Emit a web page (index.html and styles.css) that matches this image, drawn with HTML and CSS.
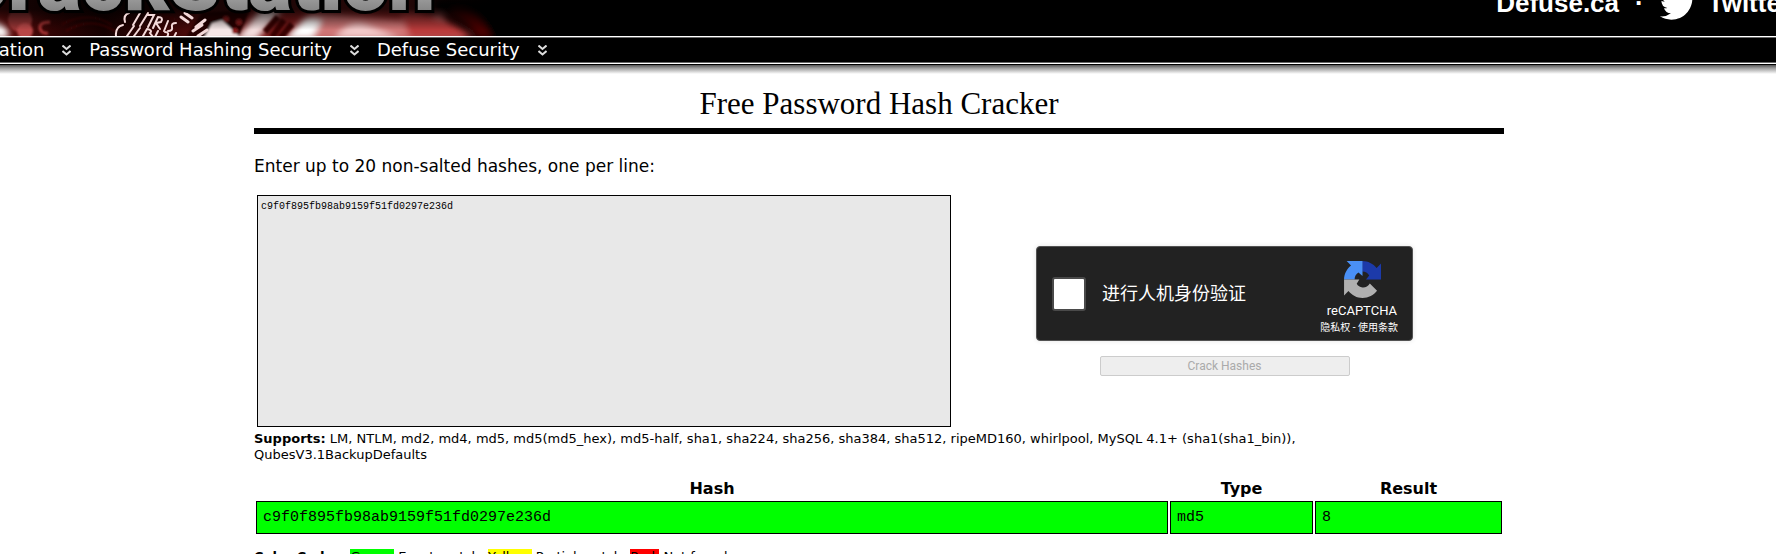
FILE: index.html
```
<!DOCTYPE html>
<html lang="en">
<head>
<meta charset="utf-8">
<title>CrackStation - Free Password Hash Cracker</title>
<link rel="stylesheet" href="styles.css">
</head>
<body>
<header class="banner">
  <svg class="banner-art" viewBox="0 0 520 36" role="img" aria-label="CrackStation">
    <defs>
      <filter id="soft" x="-20%" y="-50%" width="140%" height="200%"><feGaussianBlur stdDeviation="3"/></filter>
      <filter id="fine" x="-20%" y="-50%" width="140%" height="200%"><feGaussianBlur stdDeviation="0.8"/></filter>
      <linearGradient id="base" x1="0" x2="1">
        <stop offset="0" stop-color="#6b1010"/><stop offset=".1" stop-color="#300404"/>
        <stop offset=".2" stop-color="#140000"/><stop offset=".32" stop-color="#3a0505"/>
        <stop offset=".5" stop-color="#7a1818"/><stop offset=".78" stop-color="#8f2020"/>
        <stop offset=".86" stop-color="#2a0303"/><stop offset=".95" stop-color="#000"/>
      </linearGradient>
      <linearGradient id="shade" x1="0" y1="0" x2="0" y2="1">
        <stop offset=".3" stop-color="#000" stop-opacity=".75"/><stop offset="1" stop-color="#000" stop-opacity="0"/>
      </linearGradient>
      <linearGradient id="metal" gradientUnits="userSpaceOnUse" x1="0" y1="-38" x2="0" y2="11">
        <stop offset="0" stop-color="#eee"/><stop offset=".75" stop-color="#999"/><stop offset="1" stop-color="#858585"/>
      </linearGradient>
    </defs>
    <rect width="520" height="36" fill="url(#base)"/>
    <g filter="url(#soft)">
      <path d="M0 24Q10 28 8 38H-6V20z" fill="#fff"/>
      <path d="M235 40L262 8 282 10 256 40z" fill="#f4dede"/>
      <path d="M285 40L312 12 400 20 440 14 465 40z" fill="#cf7474"/>
      <path d="M285 38L305 18 322 20 312 38z" fill="#fff"/>
      <path d="M335 38Q350 18 368 26L400 38z" fill="#f3caca"/>
      <path d="M400 12Q436 10 474 38H410z" fill="#b83a3a"/>
      <path d="M432 0H520V36H490Q462 6 438 12z" fill="#050000"/>
      <path d="M478 38Q470 22 450 10Q476 4 492 38z" fill="#4a0505"/>
    </g>
    <g filter="url(#fine)">
      <circle cx="20" cy="20" r="12" fill="#9a3434"/>
      <circle cx="25" cy="31" r="8" fill="#b84747"/>
      <path d="M50 22q-11 0-10 6q1 6 8 5" fill="none" stroke="#a93636" stroke-width="3"/>
      <path d="M62 24Q90 10 112 25M66 31Q92 15 116 32M152 17Q170 13 182 24" fill="none" stroke="#5a1010"/>
      <path d="M186 37L202 12 250 10 238 37z" fill="#250202"/>
      <path d="M204 38L212 23 222 20 240 37z" fill="#f6e7e7"/>
      <path d="M272 37L284 20M265 32L278 17M280 38L292 24" stroke="#380303" stroke-width="6"/>
      <g fill="#8d1f1f"><circle cx="226" cy="19" r="3"/><circle cx="239" cy="22" r="3"/><circle cx="235" cy="31" r="3"/></g>
    </g>
    <rect width="520" height="30" fill="url(#shade)"/>
    <g fill="none" stroke="#f3d9d9" stroke-width="2" stroke-linecap="round">
      <path d="M129 13q-6 2-4 9M140 13l-7 12M148 13l-8 13M148 15l6 0-6 12M158 17l-5 11M158 17q6 0 3 5l-5 1 4 6M168 21l-4 10M176 23q-5 0-4 4t-4 4"/>
      <path d="M123 25q-8 2-7 11M134 26l-7 10M140 28l-6 8M147 29l-4 7M147 29q6 1 3 4l3 4M158 31l-3 6M165 32q5 0 2 5M176 33l-2 4"/>
      <path d="M181 17l7 5M185 13l7 5M193 31l9-6M198 36l9-6M196 27l9-7" stroke-width="3"/>
    </g>
    <text class="banner-word" x="435" y="10" text-anchor="end">CrackStation</text>
  </svg>
  <div class="banner-links">
    <a href="#">Defuse.ca</a>
    <span class="banner-dot">·</span>
    <a href="#" class="banner-twitter">
      <svg class="bird" viewBox="0 0 24 24" aria-hidden="true"><path fill="#fff" d="M23.953 4.57a10 10 0 01-2.825.775 4.958 4.958 0 002.163-2.723c-.951.555-2.005.959-3.127 1.184a4.92 4.92 0 00-8.384 4.482C7.69 8.095 4.067 6.13 1.64 3.162a4.822 4.822 0 00-.666 2.475c0 1.71.87 3.213 2.188 4.096a4.904 4.904 0 01-2.228-.616v.06a4.923 4.923 0 003.946 4.827 4.996 4.996 0 01-2.212.085 4.936 4.936 0 004.604 3.417 9.867 9.867 0 01-6.102 2.105c-.39 0-.779-.023-1.17-.067a13.995 13.995 0 007.557 2.209c9.053 0 13.998-7.496 13.998-13.985 0-.21 0-.42-.015-.63A9.935 9.935 0 0024 4.59z"/></svg>
      <span>Twitter</span>
    </a>
  </div>
</header>
<nav class="menu">
  <a href="#">CrackStation<svg class="chevron" viewBox="0 0 9 11" aria-hidden="true"><path d="M0.500 0.500L4.500 4 8.500 0.500M0.500 6L4.500 9.500 8.500 6"/></svg></a>
  <a href="#">Password Hashing Security<svg class="chevron" viewBox="0 0 9 11" aria-hidden="true"><path d="M0.500 0.500L4.500 4 8.500 0.500M0.500 6L4.500 9.500 8.500 6"/></svg></a>
  <a href="#">Defuse Security<svg class="chevron" viewBox="0 0 9 11" aria-hidden="true"><path d="M0.500 0.500L4.500 4 8.500 0.500M0.500 6L4.500 9.500 8.500 6"/></svg></a>
</nav>
<div class="menu-edge"></div>
<main class="content">
  <h1 class="title">Free Password Hash Cracker</h1>
  <form class="cracker">
    <label class="prompt" for="hashes">Enter up to 20 non-salted hashes, one per line:</label>
    <div class="entry">
      <textarea class="hashes" id="hashes" spellcheck="false">c9f0f895fb98ab9159f51fd0297e236d</textarea>
      <div class="submit-side">
        <div class="captcha">
          <input type="checkbox" class="captcha-box" id="human">
          <label class="captcha-label" for="human" lang="zh-CN">进行人机身份验证</label>
          <div class="captcha-brand">
            <svg class="captcha-logo" viewBox="0 0 64 64" aria-hidden="true">
              <path fill="#1c3aa9" d="M64 31.950V4.500L56.400 12.100C50.500 4.900 41.600 .100 31.600 .100V18.300C37.200 18.400 41 21 43.600 25L38 31.950z"/>
              <path fill="#4a90f5" d="M32 .100H4.600L12.200 7.700C4.900 13.600 .100 22.200 .100 32H18.300C18.400 26.500 21 22.700 25 20.100L32 26z"/>
              <path fill="#b0b0b0" d="M.100 32V59.500L7.700 51.900C13.600 59.100 22.200 64 32 64 42.300 64 51.400 59.100 57.200 51.500L44.700 38.900C41.500 43.800 37.500 46.100 32 45.800 27.500 45.500 24 43 22 39.500L26.500 32z"/>
            </svg>
            <span class="captcha-name">reCAPTCHA</span>
            <span class="captcha-terms" lang="zh-CN"><a href="#">隐私权</a> - <a href="#">使用条款</a></span>
          </div>
        </div>
        <button type="submit" class="crack" disabled>Crack Hashes</button>
      </div>
    </div>
  </form>
  <p class="supports"><strong>Supports:</strong> LM, NTLM, md2, md4, md5, md5(md5_hex), md5-half, sha1, sha224, sha256, sha384, sha512, ripeMD160, whirlpool, MySQL 4.1+ (sha1(sha1_bin)), QubesV3.1BackupDefaults</p>
  <table class="results">
    <thead><tr><th class="col-hash">Hash</th><th class="col-type">Type</th><th>Result</th></tr></thead>
    <tbody><tr><td>c9f0f895fb98ab9159f51fd0297e236d</td><td>md5</td><td>8</td></tr></tbody>
  </table>
  <p class="legend"><strong>Color Codes:</strong> <span class="green">Green:</span> Exact match, <span class="yellow">Yellow:</span> Partial match, <span class="red">Red:</span> Not found.</p>
</main>
</body>
</html>
```
FILE: styles.css
```
* { box-sizing: border-box; }

body {
  margin: 0;
  height: 100vh;
  overflow: hidden;
  background: #fff;
  color: #000;
  font: 16px/20px Verdana, "DejaVu Sans", sans-serif;
}

a { color: inherit; text-decoration: none; }

.banner {
  display: flex;
  justify-content: space-between;
  height: 36px;
  overflow: hidden;
  background: #000;
}

.banner-art { width: 520px; height: 36px; flex: none; }

.banner-word {
  font: 900 82px Roboto, sans-serif;
  fill: url(#metal);
  stroke: #000;
  stroke-width: 6px;
  paint-order: stroke;
}

.banner-links {
  display: flex;
  align-items: center;
  height: 36px;
  margin: -13px -15px 0 0;
  color: #fff;
  font: bold 26px/32px "Liberation Sans", Arial, sans-serif;
}

.banner-links > a:first-child,
.banner-dot,
.banner-twitter span { margin-bottom: 4px; }
.banner-dot { padding: 0 16px; }
.banner-twitter { display: flex; align-items: center; gap: 12px; }
.bird { width: 36px; height: 36px; }

.menu {
  display: flex;
  gap: 18px;
  height: 28px;
  overflow: hidden;
  background: #000;
  border-top: 1px solid #fff;
  border-bottom: 1px solid #fff;
  box-shadow: inset 0 1px #666, inset 0 -1px #666;
  color: #fff;
  font-size: 18px;
  line-height: 24px;
}

.menu a { display: flex; align-items: center; gap: 18px; white-space: nowrap; }
.menu a:first-child { margin-left: -71px; }
.chevron { width: 9px; height: 11px; fill: none; stroke: #ddd; stroke-width: 2px; }

.menu-edge {
  height: 10px;
  background: linear-gradient(#000 1px, #555 1px, #999 4px, #fff 10px);
}

.content { margin: 0 272px 0 254px; }

.title {
  margin: 0;
  padding: 12px 0 6px;
  border-bottom: 6px solid #000;
  font: 31px/36px "Liberation Serif", "Times New Roman", serif;
  text-align: center;
}

.prompt { display: block; padding: 22px 0 19px; font-size: 17px; }

.entry { display: flex; }

.hashes {
  flex: 0 0 calc(56% - 6px);
  height: 232px;
  margin: 0 0 0 3px;
  padding: 4px 3px;
  border: 1px solid #000;
  border-radius: 0;
  background: #e8e8e8;
  color: #000;
  font: 10px/14px "Liberation Mono", monospace;
  resize: none;
}

.submit-side {
  flex: 1;
  display: flex;
  flex-direction: column;
  align-items: center;
  justify-content: center;
  gap: 15px;
  padding-right: 6px;
}

.captcha {
  display: flex;
  align-items: center;
  width: 377px;
  height: 95px;
  padding: 0 14px 0 15px;
  border: 1px solid #525252;
  border-radius: 4px;
  background: #222;
  box-shadow: 0 0 5px rgba(0, 0, 0, .1);
  color: #fff;
}

.captcha-box {
  appearance: none;
  width: 34px;
  height: 34px;
  margin: 0 16px 0 0;
  border: 2px solid #4a4a4a;
  border-radius: 3px;
  background: #fff;
}

.captcha-label { font: 18px/24px Roboto, "Noto Sans CJK SC", sans-serif; }

.captcha-brand {
  display: flex;
  flex-direction: column;
  align-items: flex-end;
  margin-left: auto;
  padding-top: 11px;
}

.captcha-logo { width: 37px; height: 37px; margin: 0 17px 5px 0; }
.captcha-name { margin-right: 1px; font: 13px/16px Roboto, sans-serif; }
.captcha-terms { font: 10px/18px Roboto, "Noto Sans CJK SC", sans-serif; }

.crack {
  width: 250px;
  height: 20px;
  padding: 0;
  border: 1px solid #ccc;
  border-radius: 2px;
  background: #eee;
  color: #aaa;
  font: 12px/18px Roboto, sans-serif;
}

.supports {
  max-width: 1110px;
  margin: 4px 0 14px;
  font-size: 13px;
  line-height: 16px;
}

.results {
  width: 100%;
  border-spacing: 2px;
  table-layout: fixed;
}

.results th { padding: 0; line-height: 20px; }
.col-hash { width: 912px; }
.col-type { width: 143px; }

.results td {
  padding: 6px;
  border: 1px solid #000;
  background: #0f0;
  font: 15px/19px "Liberation Mono", monospace;
}

.legend { margin: 13px 0 0; font-size: 13px; line-height: 16px; }
.green { background: #0f0; }
.yellow { background: #ff0; }
.red { background: #f00; }
```
